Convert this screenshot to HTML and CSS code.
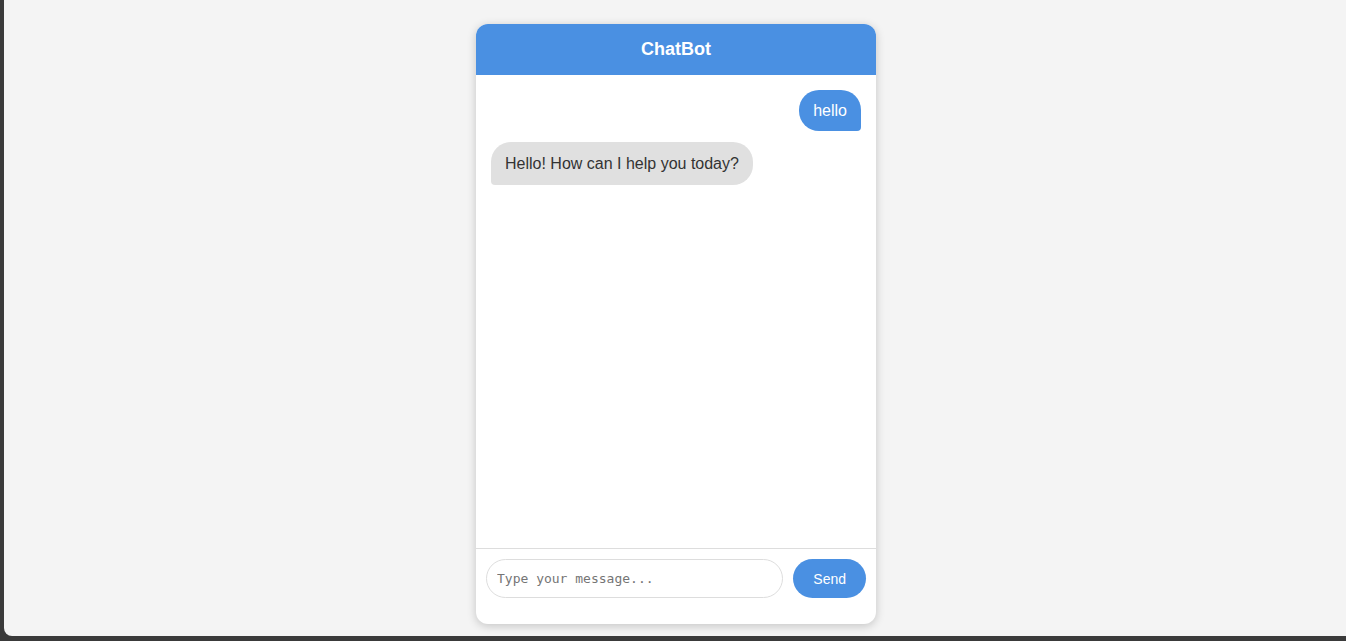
FILE: index.html
```html
<!DOCTYPE html>
<html lang="en">
<head>
  <meta charset="UTF-8">
  <meta name="viewport" content="width=device-width, initial-scale=1.0">
  <title>ChatBot</title>
  <link rel="stylesheet" href="styles.css">
</head>
<body>

  <div class="page">
    <div class="chat">
      <div class="chat__header">ChatBot</div>

      <div class="chat__messages">
        <div class="message message--user">hello</div>
        <div class="message message--bot">Hello! How can I help you today?</div>
      </div>

      <div class="chat__input">
        <input class="chat__field" type="text" placeholder="Type your message...">
        <button class="chat__send" type="button">Send</button>
      </div>
    </div>
  </div>

</body>
</html>
```

FILE: styles.css
```css
:root {
  --clr-blue: #4a90e2;
  --clr-bubble: #e0e0e0;
  --clr-border: #dddddd;

  font-family: "Liberation Sans", Arial, sans-serif;
}

* {
  box-sizing: border-box;
}

body {
  margin: 0;
  padding: 0;
  height: 641px;
  background: #3a3a3a;
  overflow: hidden;
}

.page {
  margin-left: 4px;
  height: 636px;
  padding: 24px 0 0 2px;
  background: #f4f4f4;
  border-bottom-left-radius: 8px;
  display: flex;
  justify-content: center;
  align-items: flex-start;
}

.chat {
  width: 400px;
  height: 600px;
  background: #fff;
  border-radius: 12px;
  box-shadow: 0 2px 10px rgba(0, 0, 0, 0.2);
  display: flex;
  flex-direction: column;
  overflow: hidden;
}

.chat__header {
  background: var(--clr-blue);
  color: #fff;
  font-size: 18px;
  font-weight: 700;
  text-align: center;
  padding: 15px;
  line-height: 21px;
}

.chat__messages {
  flex: 1 1 auto;
  padding: 15px;
  display: flex;
  flex-direction: column;
  gap: 11px;
}

.message {
  max-width: 80%;
  padding: 10px 14px;
  font-size: 16px;
  line-height: 21px;
  border-radius: 20px;
}

.message--user {
  align-self: flex-end;
  background: var(--clr-blue);
  color: #fff;
  border-bottom-right-radius: 4px;
}

.message--bot {
  align-self: flex-start;
  background: var(--clr-bubble);
  color: #333;
  border-bottom-left-radius: 4px;
  padding-top: 11px;
  padding-bottom: 11px;
}

.chat__input {
  border-top: 1px solid var(--clr-border);
  padding: 10px 10px 26px;
  display: flex;
  gap: 10px;
}

.chat__field {
  flex: 1 1 auto;
  height: 39px;
  padding: 0 10px;
  border: 1px solid var(--clr-border);
  border-radius: 20px;
  font-family: "DejaVu Sans Mono", "Liberation Mono", monospace;
  font-size: 13px;
  color: #333;
  outline: none;
}

.chat__field::placeholder {
  color: #757575;
}

.chat__send {
  height: 39px;
  padding: 0 20px;
  border: none;
  border-radius: 20px;
  background: var(--clr-blue);
  color: #fff;
  font-family: inherit;
  font-size: 14px;
  cursor: pointer;
}
```
